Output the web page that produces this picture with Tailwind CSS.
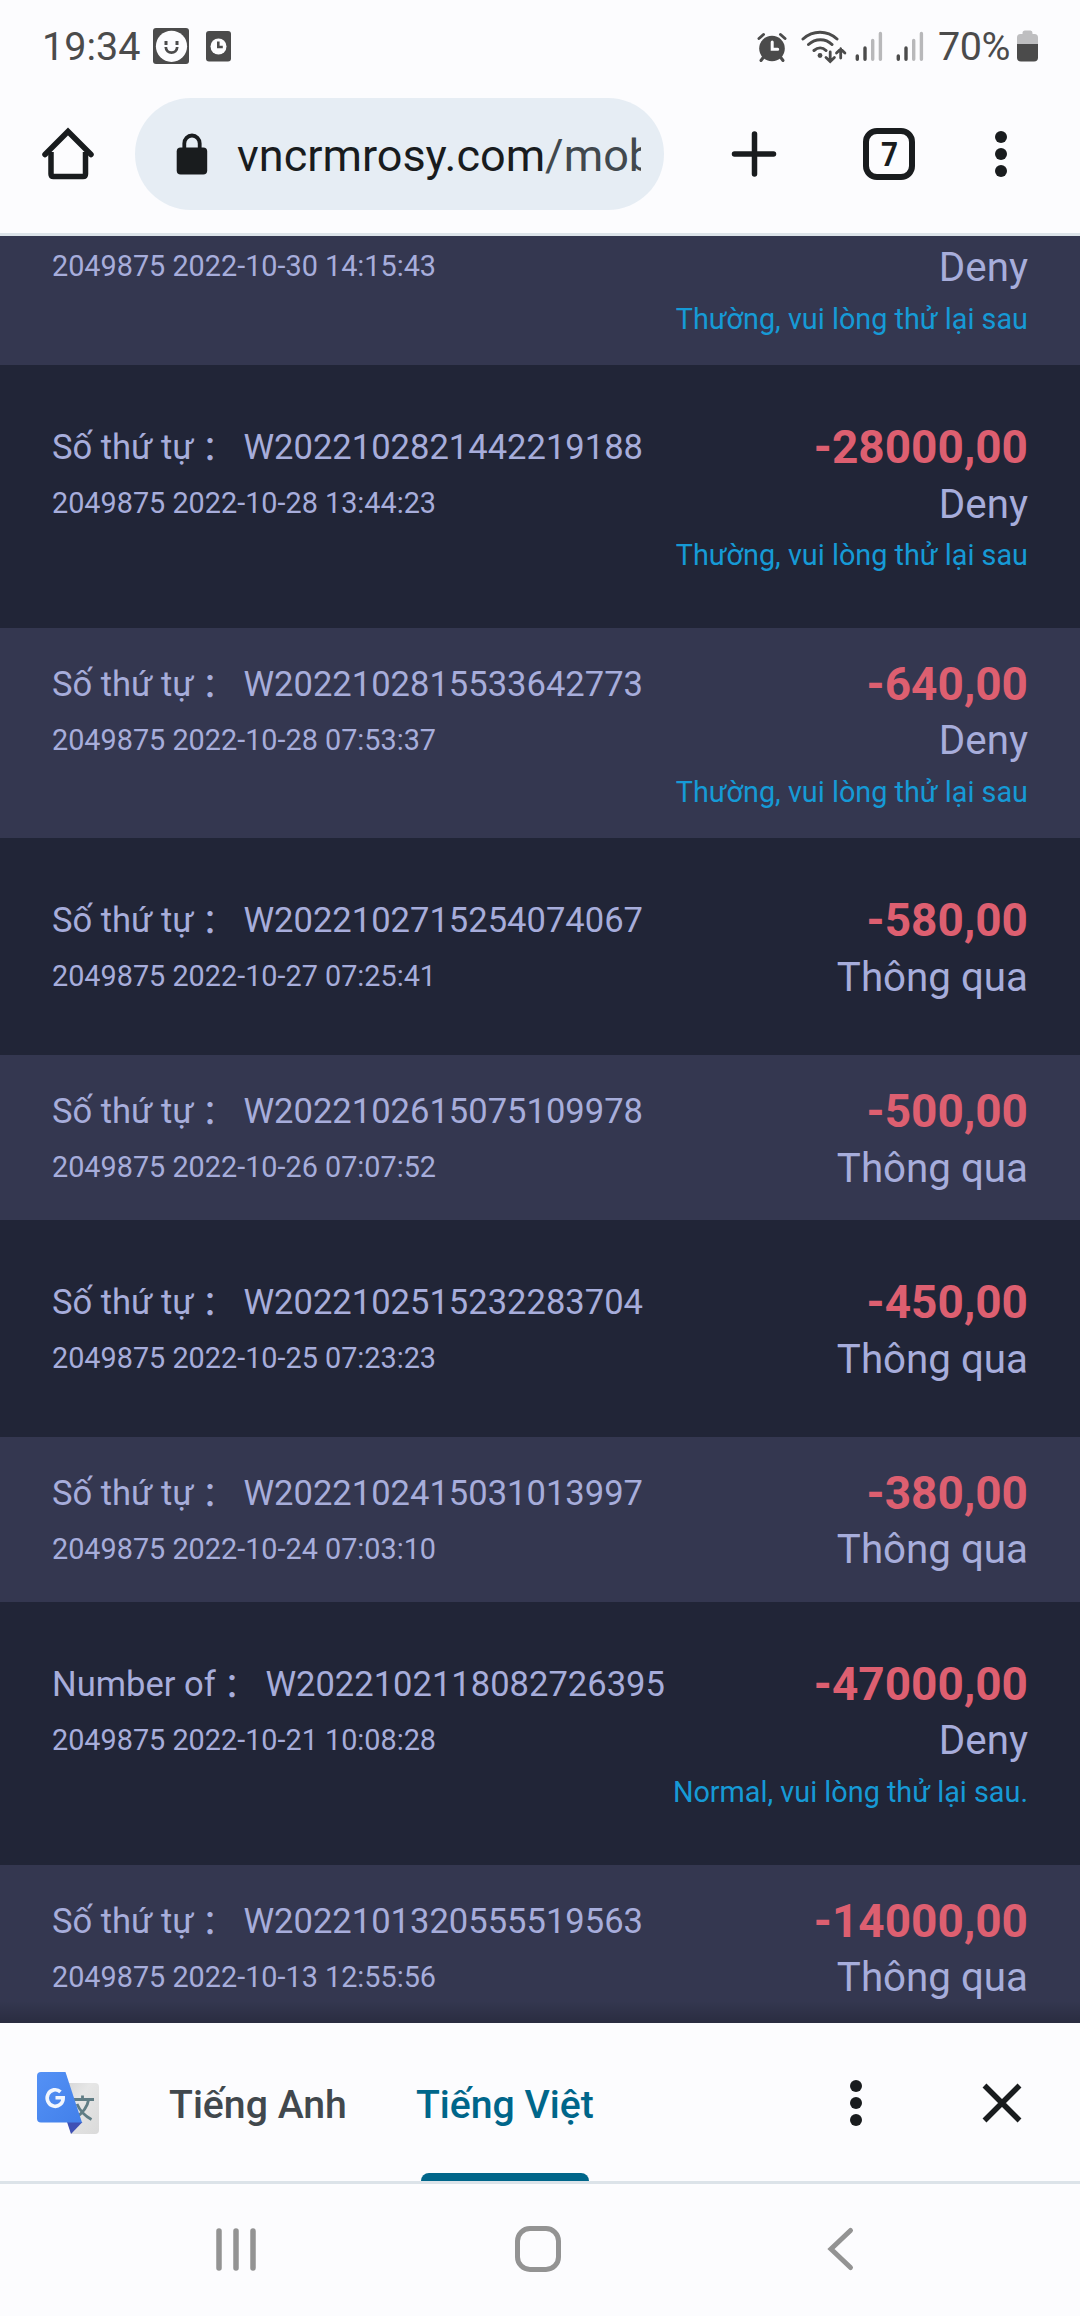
<!DOCTYPE html>
<html lang="vi">
<head>
  <meta charset="UTF-8">
  <meta name="viewport" content="width=device-width, initial-scale=1.0">
  <title>vncrmrosy.com</title>
  <script src="https://cdn.jsdelivr.net/npm/@tailwindcss/browser@4"></script>
</head>
<body class="bg-[#fcfcfe] font-['Roboto','Noto_Sans_CJK_JP',sans-serif]">
  <div class="w-[1080px] h-[2316px] flex flex-col overflow-hidden">

    <!-- Status bar -->
    <div class="h-[98px] shrink-0 flex items-start pl-[42px] pr-[42px] pt-[22px] text-[#4b4b4b]">
      <span class="w-[111px] pt-px text-[39.5px] leading-[48px]">19:34</span>
      <svg class="w-[36px] h-[36px] mt-[6px]" viewBox="0 0 36 36">
        <rect width="36" height="36" rx="3" fill="#4b4b4b"/>
        <circle cx="18.5" cy="18.3" r="15.6" fill="#fcfcfe"/>
        <path d="M13 13v4M24 13v4" stroke="#4b4b4b" stroke-width="3"/>
        <path d="M12.8 19c.3 7.5 11.1 7.5 11.4 0" fill="none" stroke="#4b4b4b" stroke-width="2.8"/>
      </svg>
      <svg class="w-[25px] h-[31px] mt-[9px] ml-[17px]" viewBox="0 0 25 31">
        <rect width="25" height="30.5" rx="3" fill="#4b4b4b"/>
        <circle cx="12.5" cy="15.5" r="8" fill="#fcfcfe"/>
        <path d="M12.3 10.5v5.5h4.5" fill="none" stroke="#4b4b4b" stroke-width="2.6"/>
      </svg>

      <!-- alarm -->
      <svg class="w-[30px] h-[30px] mt-[10px] ml-auto" viewBox="756.5 32 30 30">
        <circle cx="771.5" cy="48.5" r="12.8" fill="#4b4b4b"/>
        <path d="M758.5 38.5l4.5-4M784.5 38.5l-4.5-4M760.5 60.5l3-4M782.5 60.5l-3-4" stroke="#4b4b4b" stroke-width="3" stroke-linecap="round"/>
        <path d="M771.7 42v7.3h5.5" fill="none" stroke="#fcfcfe" stroke-width="3" stroke-linecap="round"/>
      </svg>
      <!-- wifi -->
      <svg class="w-[46px] h-[35px] mt-[7px] ml-[14px]" viewBox="800.5 29 46 35" fill="none" stroke="#4b4b4b" stroke-width="3" stroke-linecap="round">
        <path d="M802.5 39c10-9 24-9 34 0M808 44.5c7-6.5 17-6.5 23.5 0M813.5 50.5c4-3.5 8.5-3.5 12 0"/>
        <circle cx="819.5" cy="55.5" r="2.4" fill="#4b4b4b" stroke="none"/>
        <path d="M829.7 52v9M825.5 57.5l4.2 4 4.2-4M840.2 58v-9M836 53l4.2-4 4.2 4" stroke-width="2.8"/>
      </svg>
      <!-- signal x2 -->
      <svg class="w-[28px] h-[32px] mt-[9px] ml-[8px]" viewBox="0 0 28 32" stroke-width="3.4" stroke-linecap="round">
        <path d="M2.3 25v3.3M10 17v11.3" stroke="#4b4b4b"/>
        <path d="M17.7 9.5v18.8M25.4 2.5v25.8" stroke="#b8b8ba"/>
      </svg>
      <svg class="w-[28px] h-[32px] mt-[9px] ml-[13px]" viewBox="0 0 28 32" stroke-width="3.4" stroke-linecap="round">
        <path d="M2.3 25v3.3M10 17v11.3" stroke="#4b4b4b"/>
        <path d="M17.7 9.5v18.8M25.4 2.5v25.8" stroke="#b8b8ba"/>
      </svg>
      <span class="w-[79px] ml-[14px] pt-px text-[39.5px] leading-[48px] tracking-[-0.4px]">70%</span>
      <svg class="w-[21px] h-[32px] mt-[8px]" viewBox="0 0 21 32">
        <path d="M0 14V7.5Q0 4 3.5 4H5.5V3Q5.5 .5 8 .5h5.5Q15.5 .5 15.5 3V4h2Q21 4 21 7.5V14Z" fill="#bebec0"/>
        <path d="M0 14h21v13.5q0 4-4 4H4q-4 0-4-4Z" fill="#4b4b4b"/>
      </svg>
    </div>

    <!-- Browser toolbar -->
    <div class="h-[138px] shrink-0 flex items-start border-b-[3px] border-[#dce3e9]">
      <svg class="w-[56px] h-[56px] mt-[28px] ml-[40px]" viewBox="40 126 56 56" fill="none" stroke="#191c1e" stroke-width="5.5">
        <path d="M51 152v22q0 2.5 2.5 2.5h29.5q2.5 0 2.5-2.5v-22" />
        <path d="M45 154.5L68 131.5l23 23" stroke-linecap="round"/>
      </svg>
      <div class="w-[529px] h-[112px] ml-[39px] rounded-[56px] bg-[#e6edf4] flex items-center">
        <svg class="w-[32px] h-[42px] ml-[41px]" viewBox="0 0 32 42">
          <rect x=".7" y="14.5" width="30.5" height="27" rx="4" fill="#191c1e"/>
          <path d="M8.3 16V10.5a7.7 8 0 0 1 15.4 0V16" fill="none" stroke="#191c1e" stroke-width="3.8"/>
        </svg>
        <div class="w-[404px] ml-[29px] pt-[3px] overflow-hidden whitespace-nowrap text-[45px] leading-[60px] text-[#191c1e]">vncrmrosy.com<span class="text-[#41484d]">/mob</span></div>
      </div>
      <svg class="w-[46px] h-[46px] mt-[33px] ml-[67px]" viewBox="0 0 46 46" stroke="#191c1e" stroke-width="5.5" stroke-linecap="round">
        <path d="M23.5 3v40M3.5 23h39"/>
      </svg>
      <div class="w-[52px] h-[52px] mt-[30px] ml-[86px] rounded-[14px] border-[6px] border-[#191c1e] flex items-center justify-center text-[33px] leading-none font-bold text-[#191c1e]"><span class="scale-x-90">7</span></div>
      <svg class="w-[12px] h-[48px] mt-[32px] ml-[80px]" viewBox="0 0 12 48" fill="#191c1e">
        <circle cx="6" cy="7" r="6"/><circle cx="6" cy="24" r="6"/><circle cx="6" cy="41" r="6"/>
      </svg>
    </div>

    <!-- Transaction list -->
    <div class="relative h-[1787px] shrink-0 overflow-hidden text-[#a7addb]">
      <div class="h-[129px] px-[52px] pt-[2px] flex justify-between bg-[#343750]">
        <div class="text-[28.8px] leading-[56px]">2049875 2022-10-30 14:15:43</div>
        <div class="text-right">
          <div class="text-[40.3px] leading-[60px]">Deny</div>
          <div class="text-[28.8px] leading-[42px] text-[#169ad6]">Thường, vui lòng thử lại sau</div>
        </div>
      </div>
      <div id="rows"></div>
      <div class="absolute inset-x-0 bottom-0 h-[22px] bg-linear-to-b from-black/0 to-black/20"></div>
    </div>

    <!-- Translate bar -->
    <div class="h-[161px] shrink-0 flex border-b-[3px] border-[#dce3e9] text-[39.2px] font-medium">
      <svg class="w-[64px] h-[66px] mt-[47px] ml-[36px]" viewBox="36 2070 64 66">
        <defs>
          <linearGradient id="blue" x1="0" y1="0" x2="1" y2="1">
            <stop offset="0" stop-color="#5491f5"/><stop offset="1" stop-color="#4280ea"/>
          </linearGradient>
          <linearGradient id="grey" x1="0" y1="0" x2="1" y2="1">
            <stop offset="0" stop-color="#d2d3d4"/><stop offset=".4" stop-color="#e6e6e6"/><stop offset="1" stop-color="#dadada"/>
          </linearGradient>
        </defs>
        <path d="M60 2083h35q4 0 4 4v43q0 4-4 4H71Z" fill="url(#grey)"/>
        <path d="M73 2099.5h21M82.5 2095.5v4M88.5 2100c-1 7-6 13-13 18M77 2104c3 7 8 12 14.5 15.5" fill="none" stroke="#607d85" stroke-width="2.8"/>
        <path d="M67 2122h15.5L71 2134Z" fill="#3f51b5"/>
        <path d="M41 2072h24.5L82 2122.5H41q-4 0-4-4V2076q0-4 4-4Z" fill="url(#blue)"/>
        <path d="M60.5 2091.8a8 8.3 0 1 0 2.7 6H55.5" fill="none" stroke="#f1f6fe" stroke-width="3.6"/>
      </svg>
      <div class="ml-[69px] pt-[56px] leading-[52px] text-[#41484d]">Tiếng Anh</div>
      <div class="relative ml-[69px] pt-[56px] leading-[52px] text-[#00668a]">Tiếng Việt
        <span class="absolute bottom-0 left-[5px] right-[5px] h-[8px] rounded-t-[8px] bg-[#00668a]"></span>
      </div>
      <svg class="w-[12px] h-[48px] mt-[56px] ml-auto" viewBox="0 0 12 48" fill="#191c1e">
        <circle cx="6" cy="7" r="6"/><circle cx="6" cy="24" r="6"/><circle cx="6" cy="41" r="6"/>
      </svg>
      <svg class="w-[40px] h-[40px] mt-[60px] ml-[120px] mr-[58px]" viewBox="0 0 40 40" stroke="#191c1e" stroke-width="5.5">
        <path d="M2.5 2.5l35 35M37.5 2.5l-35 35"/>
      </svg>
    </div>

    <!-- System navigation -->
    <div class="flex-1 flex items-start pt-[42px] pl-[216px]">
      <svg class="w-[40px] h-[44px] mt-[1px]" viewBox="0 0 40 44" stroke="#939393" stroke-width="5.5" stroke-linecap="round">
        <path d="M3 4v37M20 4v37M37 4v37"/>
      </svg>
      <div class="w-[46px] h-[46px] ml-[259px] rounded-[15px] border-[5.5px] border-[#939393]"></div>
      <svg class="w-[28px] h-[46px] ml-[266px]" viewBox="827 2226 28 46" fill="none" stroke="#939393" stroke-width="5" stroke-linecap="round">
        <path d="M850.5 2230.5L831 2249l19.5 18.5"/>
      </svg>
    </div>
  </div>

  <script>
    const orders = [
      { label: "Số thứ tự", no: "W2022102821442219188", time: "2022-10-28 13:44:23", amount: "-28000,00", status: "Deny", note: "Thường, vui lòng thử lại sau" },
      { label: "Số thứ tự", no: "W2022102815533642773", time: "2022-10-28 07:53:37", amount: "-640,00", status: "Deny", note: "Thường, vui lòng thử lại sau" },
      { label: "Số thứ tự", no: "W2022102715254074067", time: "2022-10-27 07:25:41", amount: "-580,00", status: "Thông qua" },
      { label: "Số thứ tự", no: "W2022102615075109978", time: "2022-10-26 07:07:52", amount: "-500,00", status: "Thông qua" },
      { label: "Số thứ tự", no: "W2022102515232283704", time: "2022-10-25 07:23:23", amount: "-450,00", status: "Thông qua" },
      { label: "Số thứ tự", no: "W2022102415031013997", time: "2022-10-24 07:03:10", amount: "-380,00", status: "Thông qua" },
      { label: "Number of", no: "W2022102118082726395", time: "2022-10-21 10:08:28", amount: "-47000,00", status: "Deny", note: "Normal, vui lòng thử lại sau." },
      { label: "Số thứ tự", no: "W2022101320555519563", time: "2022-10-13 12:55:56", amount: "-14000,00", status: "Thông qua" }
    ];

    const rows = document.getElementById("rows");
    orders.forEach((o, i) => {
      const row = document.createElement("div");
      // odd rows are lighter and tighter
      row.className = i % 2
        ? "flex justify-between px-[52px] pt-[29px] bg-[#343750] " + (o.note ? "h-[210px]" : "h-[165px]")
        : "flex justify-between px-[52px] pt-[55px] bg-[#212537] " + (o.note ? "h-[263px]" : "h-[217px]");
      row.innerHTML = `
        <div>
          <div class="text-[34.56px] leading-[54px]">${o.label}<span class="relative top-[3px] -ml-px -mr-px">：</span>&nbsp;&nbsp;${o.no}</div>
          <div class="text-[28.8px] leading-[58px]">2049875 ${o.time}</div>
        </div>
        <div class="text-right">
          <div class="text-[46px] leading-[54px] font-bold text-[#dd5f70]">${o.amount}</div>
          <div class="text-[40.3px] ${i === 1 || i > 4 ? "leading-[60px]" : "leading-[62px]"}">${o.status}</div>
          ${o.note ? `<div class="text-[28.8px] ${i === 1 || i > 4 ? "leading-[43px]" : "leading-[39px]"} text-[#169ad6]">${o.note}</div>` : ""}
        </div>
      `;
      rows.appendChild(row);
    });
  </script>
</body>
</html>
